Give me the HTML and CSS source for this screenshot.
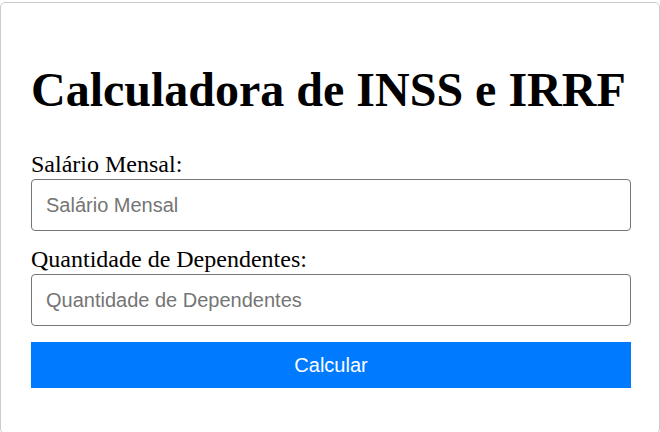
FILE: index.html
```html
<!DOCTYPE html>
<html lang="pt-BR">
<head>
<meta charset="utf-8">
<title>Calculadora de INSS e IRRF</title>
<link rel="stylesheet" href="styles.css">
</head>
<body>
<div class="card">
  <h1 class="title">Calculadora de INSS e IRRF</h1>
  <form class="form">
    <label class="label" for="salario">Salário Mensal:</label>
    <input class="input input-first" id="salario" type="text" placeholder="Salário Mensal">
    <label class="label" for="dep">Quantidade de Dependentes:</label>
    <input class="input input-last" id="dep" type="text" placeholder="Quantidade de Dependentes">
    <button class="btn" type="button">Calcular</button>
  </form>
</div>
</body>
</html>
```
FILE: styles.css
```css
html, body { margin: 0; padding: 0; background: #fff; }
body { font-family: "Liberation Serif", "Times New Roman", serif; font-size: 24px; color: #000; }
.card {
  box-sizing: border-box;
  width: 660px;
  margin-top: 2px;
  padding: 27px 28px 45px 30px;
  border: 1px solid #ccc;
  border-radius: 5px;
}
.title {
  font-size: 48px;
  font-weight: bold;
  margin: 32px 0 33px;
  line-height: 55px;
  white-space: nowrap;
}
.form { display: flex; flex-direction: column; }
.label { display: block; line-height: 28px; }
.input {
  box-sizing: border-box;
  width: 600px;
  height: 52px;
  margin: 1px 0 14px;
  padding: 0 14px;
  border: 1px solid #767676;
  border-radius: 4px;
  font-family: "Liberation Sans", Arial, sans-serif;
  font-size: 20px;
}
.input-last { margin-bottom: 16px; }
.input::placeholder { color: #757575; }
.btn {
  width: 600px;
  height: 46px;
  border: 0;
  padding: 0;
  background: #007bff;
  color: #fff;
  font-family: "Liberation Sans", Arial, sans-serif;
  font-size: 20px;
}
```
